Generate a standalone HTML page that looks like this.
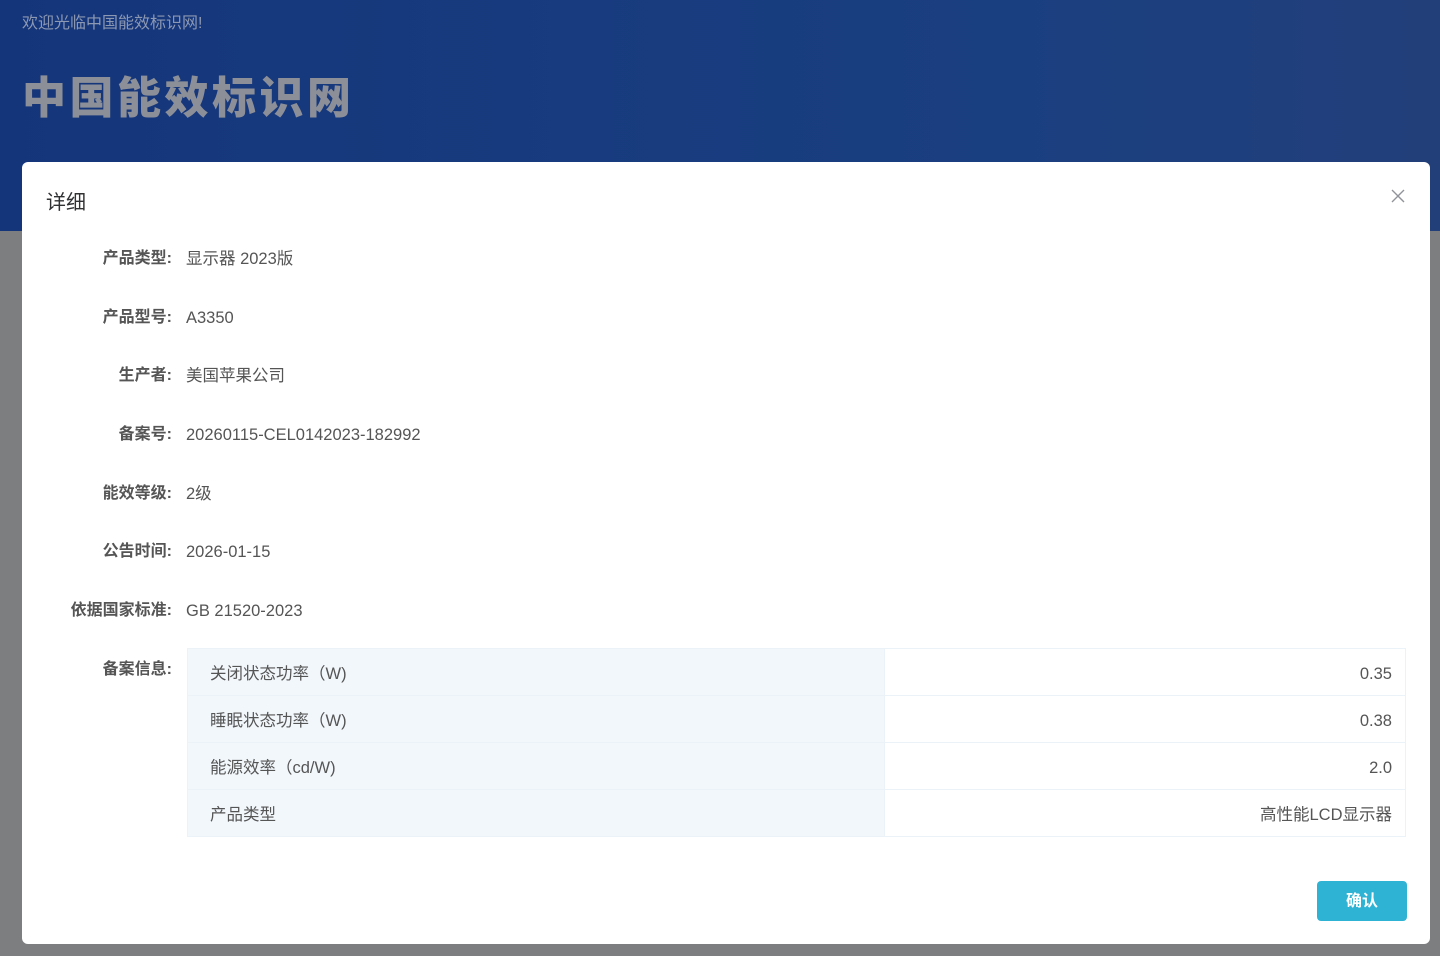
<!DOCTYPE html>
<html><head><meta charset="utf-8"><style>
*{margin:0;padding:0;box-sizing:border-box}
body{width:1440px;height:956px;overflow:hidden;background:#7d7e80;font-family:"Liberation Sans","Noto Sans CJK SC",sans-serif;position:relative}
.hdr{position:absolute;left:0;top:0;width:1440px;height:231px;background:linear-gradient(90deg,#15357a 0%,#173b7e 40%,#1a3f80 70%,#223f7a 100%)}
.welcome{position:absolute;left:22px;top:13px;font-size:16px;line-height:22px;color:#8c98b2}
.logo{position:absolute;left:22px;top:64px;font-size:44px;line-height:60px;font-weight:900;color:#8c8f98;letter-spacing:3.5px;font-family:"Noto Sans CJK SC",sans-serif}
.modal{position:absolute;left:22px;top:162px;width:1408px;height:782px;background:#fff;border-radius:6px}
.title{position:absolute;left:24px;top:28px;font-size:20px;line-height:26px;color:#303133}
.close{position:absolute;right:24px;top:26px;width:16px;height:16px}
.row{position:absolute;left:0;width:1408px;height:22px;line-height:22px;font-size:16.5px;color:#555}
.lab{position:absolute;left:-50px;top:0;width:200px;text-align:right;font-weight:bold;color:#555;font-size:16px;white-space:nowrap}
.val{position:absolute;left:164px;top:0;white-space:nowrap}
table{position:absolute;left:165px;top:486px;width:1219px;border-collapse:collapse;font-size:16.5px;color:#555}
td{height:47px;border:1px solid #ebf2f8;padding:3px 22px 0;line-height:22px}
td.k{width:697px;background:#f2f7fc}
td.v{text-align:right;padding-right:13px}
.btn{position:absolute;left:1295px;top:719px;width:90px;height:40px;background:#2fb3d4;border-radius:4px;color:#fff;font-size:16px;font-weight:bold;text-align:center;line-height:42px}
</style></head><body>
<div class="hdr"><div class="welcome">欢迎光临中国能效标识网!</div><div class="logo">中国能效标识网</div></div>
<div class="modal">
<div class="title">详细</div>
<svg class="close" viewBox="0 0 16 16"><path d="M2 2L14 14M14 2L2 14" stroke="#909399" stroke-width="1.4"/></svg>
<div class="row" style="top:86px"><span class="lab">产品类型:</span><span class="val">显示器 2023版</span></div>
<div class="row" style="top:145px"><span class="lab">产品型号:</span><span class="val">A3350</span></div>
<div class="row" style="top:203px"><span class="lab">生产者:</span><span class="val">美国苹果公司</span></div>
<div class="row" style="top:262px"><span class="lab">备案号:</span><span class="val">20260115-CEL0142023-182992</span></div>
<div class="row" style="top:321px"><span class="lab">能效等级:</span><span class="val">2级</span></div>
<div class="row" style="top:379px"><span class="lab">公告时间:</span><span class="val">2026-01-15</span></div>
<div class="row" style="top:438px"><span class="lab">依据国家标准:</span><span class="val">GB 21520-2023</span></div>
<div class="row" style="top:497px"><span class="lab">备案信息:</span></div>
<table>
<tr><td class="k">关闭状态功率（W)</td><td class="v">0.35</td></tr>
<tr><td class="k">睡眠状态功率（W)</td><td class="v">0.38</td></tr>
<tr><td class="k">能源效率（cd/W)</td><td class="v">2.0</td></tr>
<tr><td class="k">产品类型</td><td class="v">高性能LCD显示器</td></tr>
</table>
<div class="btn">确认</div>
</div>
</body></html>
